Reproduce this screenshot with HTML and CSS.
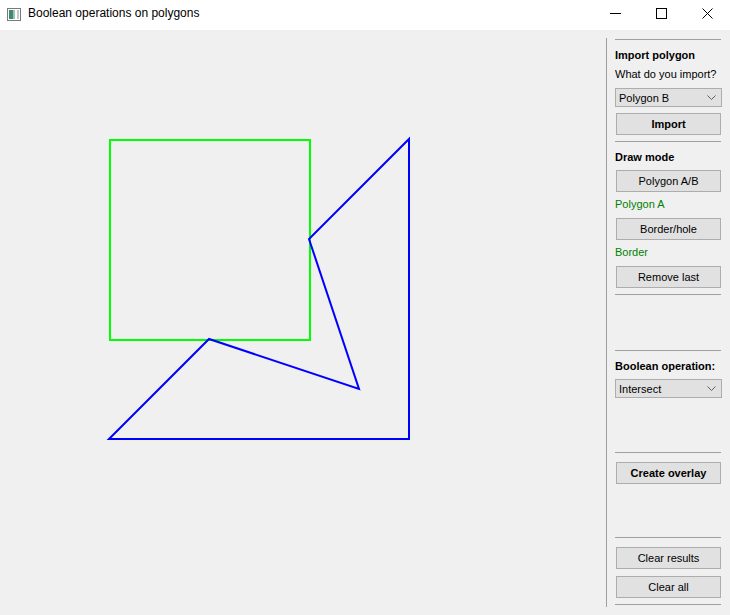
FILE: index.html
```html
<!DOCTYPE html>
<html>
<head>
<meta charset="utf-8">
<link rel="stylesheet" href="styles.css">
</head>
<body>
<div class="window">
  <div class="titlebar">
    <svg class="app-icon" width="14" height="13" viewBox="0 0 14 13">
      <rect x="0.5" y="0.5" width="13" height="12" fill="#ffffff" stroke="#7a7a7a"/>
      <rect x="2" y="2" width="4" height="9" fill="#3c8c6c"/>
      <rect x="6" y="2" width="2" height="9" fill="#9cc4b4"/>
      <rect x="10" y="2" width="2" height="9" fill="#c8c8c8"/>
    </svg>
    <span class="title">Boolean operations on polygons</span>
    <div class="controls">
      <span class="ctl"><svg width="11" height="11" viewBox="0 0 11 11"><line x1="0" y1="5.5" x2="11" y2="5.5" stroke="#000" stroke-width="1"/></svg></span>
      <span class="ctl"><svg width="11" height="11" viewBox="0 0 11 11"><rect x="0.5" y="0.5" width="10" height="10" fill="none" stroke="#000" stroke-width="1"/></svg></span>
      <span class="ctl"><svg width="11" height="11" viewBox="0 0 11 11"><path d="M0.5 0.5 L10.5 10.5 M10.5 0.5 L0.5 10.5" stroke="#000" stroke-width="1"/></svg></span>
    </div>
  </div>
  <div class="main">
    <div class="canvas">
      <svg width="606" height="585" viewBox="0 30 606 585">
        <rect x="110" y="140" width="200" height="200" fill="none" stroke="#00ff00" stroke-width="2"/>
        <polygon points="409,139 409,439 109,439 209,339 359,389 309,239" fill="none" stroke="#0000ff" stroke-width="2"/>
      </svg>
    </div>
    <div class="panel">
      <div class="sep s1"></div>
      <div class="heading m8">Import polygon</div>
      <div class="label m4">What do you import?</div>
      <div class="combo m6"><span>Polygon B</span><svg class="chev" width="9" height="5" viewBox="0 0 9 5"><path d="M0.5 0.5 L4.5 4.5 L8.5 0.5" fill="none" stroke="#606060"/></svg></div>
      <div class="btn bold m6">Import</div>
      <div class="sep m6"></div>
      <div class="heading m8">Draw mode</div>
      <div class="btn m5">Polygon A/B</div>
      <div class="label green m5">Polygon A</div>
      <div class="btn m6">Border/hole</div>
      <div class="label green m5">Border</div>
      <div class="btn m6">Remove last</div>
      <div class="sep m6"></div>
      <div class="sep m55"></div>
      <div class="heading m8">Boolean operation:</div>
      <div class="combo m5"><span>Intersect</span><svg class="chev" width="9" height="5" viewBox="0 0 9 5"><path d="M0.5 0.5 L4.5 4.5 L8.5 0.5" fill="none" stroke="#606060"/></svg></div>
      <div class="sep m54"></div>
      <div class="btn bold m9">Create overlay</div>
      <div class="sep m53"></div>
      <div class="btn m9">Clear results</div>
      <div class="btn m7">Clear all</div>
      <div class="sep m6"></div>
    </div>
  </div>
</div>
</body>
</html>
```

FILE: styles.css
```css
html, body {
  margin: 0;
  padding: 0;
}
body {
  width: 730px;
  height: 615px;
  overflow: hidden;
  background: #f0f0f0;
  font-family: "Liberation Sans", Arial, sans-serif;
  font-size: 11px;
  color: #000;
}
.window {
  display: flex;
  flex-direction: column;
  height: 615px;
}
.titlebar {
  height: 30px;
  background: #ffffff;
  display: flex;
  align-items: center;
  flex: none;
}
.app-icon {
  margin-left: 7px;
  margin-right: 7px;
  margin-top: -2px;
}
.title {
  font-family: "Liberation Sans", Arial, sans-serif;
  font-size: 12px;
  margin-top: -4px;
  color: #000;
}
.controls {
  margin-left: auto;
  display: flex;
  margin-top: -4px;
}
.ctl {
  width: 46px;
  height: 30px;
  display: flex;
  align-items: center;
  justify-content: center;
}
.main {
  flex: 1;
  display: flex;
}
.canvas {
  width: 606px;
  flex: none;
}
.canvas svg {
  display: block;
}
.panel {
  margin-top: 8px;
  height: 569px;
  border-left: 1px solid #a0a0a0;
  padding-left: 8px;
  width: 107px;
  display: flex;
  flex-direction: column;
}
.sep {
  height: 1px;
  background: #a0a0a0;
  flex: none;
  margin-right: 1px;
}
.s1 { margin-top: 1px; }
.m4 { margin-top: 4px; }
.m5 { margin-top: 5px; }
.m6 { margin-top: 6px; }
.m7 { margin-top: 7px; }
.m8 { margin-top: 8px; }
.m9 { margin-top: 9px; }
.m53 { margin-top: 53px; }
.m54 { margin-top: 54px; }
.m55 { margin-top: 55px; }
.heading {
  height: 15px;
  line-height: 15px;
  font-weight: bold;
  white-space: nowrap;
}
.label {
  height: 15px;
  line-height: 15px;
  white-space: nowrap;
}
.green {
  color: #008000;
}
.combo {
  height: 17px;
  border: 1px solid #adadad;
  background: #e1e1e1;
  display: flex;
  align-items: center;
  padding-left: 3px;
  padding-right: 5px;
  flex: none;
}
.combo .chev {
  margin-left: auto;
}
.btn {
  height: 20px;
  margin-left: 1px;
  margin-right: 1px;
  border: 1px solid #adadad;
  background: #e1e1e1;
  display: flex;
  align-items: center;
  justify-content: center;
  flex: none;
  white-space: nowrap;
}
.bold {
  font-weight: bold;
}
```
